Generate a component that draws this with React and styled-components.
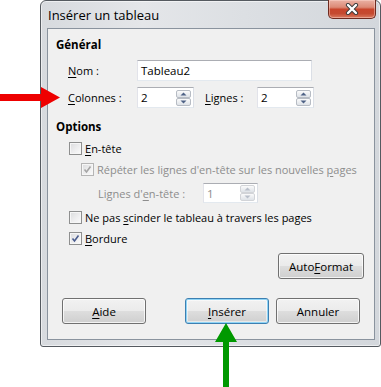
import React from 'react';
import styled, { createGlobalStyle } from 'styled-components';

const GlobalStyle = createGlobalStyle`
  html, body { margin: 0; padding: 0; background: #fff; }
  body {
    font-family: "Open Sans", "Noto Sans", sans-serif;
    font-size: 11px;
    color: #000;
  }
`;

const Page = styled.div`
  position: relative;
  width: 381px;
  height: 387px;
  overflow: hidden;
  background: #fff;
`;

const Window = styled.div`
  box-sizing: border-box;
  margin-left: 40px;
  width: 341px;
  height: 347px;
  border: 1px solid #555a60;
  border-radius: 6px 6px 3px 3px;
  background: linear-gradient(90deg, #d7dade 0%, #e4e6e9 30%, #dcdfe3 60%, #d3d7dc 100%);
  box-shadow: inset 0 0 0 1px rgba(255, 255, 255, 0.55);
  padding: 0 5px 6px 6px;
  display: flex;
  flex-direction: column;
`;

const TitleBar = styled.div`
  height: 27px;
  display: flex;
  justify-content: space-between;
  align-items: flex-start;
  padding-left: 1px;
`;

const Title = styled.div`
  margin-top: 6px;
  line-height: 17px;
  font-size: 13px;
`;

const CloseButton = styled.div`
  box-sizing: border-box;
  width: 48px;
  height: 19px;
  margin-top: -1px;
  margin-right: -1px;
  border: 1px solid #6e2a1f;
  border-top: none;
  border-radius: 0 0 5px 5px;
  background: linear-gradient(180deg, #eab1a4 0%, #dc8a76 40%, #c8452c 52%, #c54a30 75%, #d97a5f 100%);
  box-shadow: inset 0 0 0 1px rgba(255, 220, 210, 0.45);
  display: flex;
  align-items: center;
  justify-content: center;
`;

const Client = styled.div`
  flex: 1;
  box-sizing: border-box;
  border: 1px solid #8a939e;
  background: #f0f0f0;
  display: flex;
  flex-direction: column;
`;

const Heading = styled.div`
  margin-top: ${p => p.$top}px;
  padding-left: 8px;
  line-height: 16px;
  font-weight: bold;
  font-size: 11.5px;
`;

const Row = styled.div`
  display: flex;
  align-items: center;
  height: ${p => p.$h || 16}px;
  margin-top: ${p => p.$top}px;
  padding-left: ${p => p.$indent}px;
  color: ${p => (p.$disabled ? '#8d8d8d' : '#000')};
`;

const Label = styled.div`
  width: ${p => p.$w}px;
  flex-shrink: 0;
  margin-left: ${p => p.$ml || 0}px;
  white-space: nowrap;
`;

const U = styled.span`
  text-decoration: underline;
  text-underline-offset: 2px;
`;

const TextBox = styled.div`
  box-sizing: border-box;
  width: ${p => p.$w}px;
  height: ${p => p.$h || 21}px;
  border: 1px solid #abadb3;
  border-color: #abadb3 #dbdfe6 #e3e9ef #e2e3ea;
  background: #fff;
  display: flex;
  align-items: center;
  padding-left: 3px;
  font-size: 11.5px;
  color: ${p => (p.$disabled ? '#8d8d8d' : '#000')};
`;

const SpinValue = styled.span`
  flex: 1;
`;

const SpinButtons = styled.div`
  display: flex;
  flex-direction: column;
  margin-right: 2px;
`;

const SpinButton = styled.div`
  box-sizing: border-box;
  width: 15px;
  height: 8px;
  border: 1px solid ${p => (p.$disabled ? '#d2d4d8' : '#b7bcc4')};
  border-radius: 2px;
  background: linear-gradient(180deg, #fbfbfb 0%, #eceef1 50%, #dfe3e8 100%);
  display: flex;
  align-items: center;
  justify-content: center;
`;

const CheckBox = styled.div`
  box-sizing: border-box;
  width: 13px;
  height: 13px;
  flex-shrink: 0;
  border: 1px solid ${p => (p.$disabled ? '#b5b5b5' : '#8e8f8f')};
  background: linear-gradient(135deg, #dadbdd 0%, #eeeeef 55%, #fbfbfb 100%);
  box-shadow: inset 0 0 0 1px #f6f6f6;
  display: flex;
  align-items: center;
  justify-content: center;
  margin-right: 3px;
`;

const Button = styled.div`
  box-sizing: border-box;
  width: ${p => p.$w || 84}px;
  height: 26px;
  margin-left: ${p => p.$ml || 0}px;
  border: 1px solid ${p => (p.$default ? '#3c7fb1' : '#707070')};
  border-radius: 3px;
  background: linear-gradient(180deg, #f2f2f2 0%, #ebebeb 48%, #dddddd 52%, #cfcfcf 100%);
  box-shadow: ${p =>
    p.$default
      ? 'inset 0 0 0 1px #8fd4f6, inset 0 0 0 2px rgba(255,255,255,0.5)'
      : 'inset 0 0 0 1px rgba(255,255,255,0.75)'};
  display: flex;
  align-items: center;
  justify-content: center;
  font-size: 11.5px;
`;

const ButtonRight = styled.div`
  display: flex;
  justify-content: flex-end;
  margin-top: ${p => p.$top}px;
  padding-right: 10px;
`;

const ButtonRow = styled.div`
  display: flex;
  margin-top: ${p => p.$top}px;
  padding-left: 14px;
`;

const Overlay = styled.svg`
  position: absolute;
  left: 0;
  top: 0;
  pointer-events: none;
`;

const Tri = ({ up, disabled }) => (
  <svg width="7" height="4" viewBox="0 0 7 4">
    <path d={up ? 'M0.5 3.5 L3.5 0.5 L6.5 3.5 Z' : 'M0.5 0.5 L3.5 3.5 L6.5 0.5 Z'} fill={disabled ? '#b9bfca' : '#4d6185'} />
  </svg>
);

const Spin = ({ value, w, h, disabled }) => (
  <TextBox $w={w} $h={h} $disabled={disabled}>
    <SpinValue>{value}</SpinValue>
    <SpinButtons>
      <SpinButton $disabled={disabled}><Tri up disabled={disabled} /></SpinButton>
      <SpinButton $disabled={disabled}><Tri disabled={disabled} /></SpinButton>
    </SpinButtons>
  </TextBox>
);

const Check = ({ checked, disabled }) => (
  <CheckBox $disabled={disabled}>
    {checked && (
      <svg width="9" height="9" viewBox="0 0 9 9">
        <path d="M1.5 4.5 L3.5 7 L7.5 1.5" fill="none" stroke={disabled ? '#a5a5a5' : '#4a5c8e'} strokeWidth="1.6" />
      </svg>
    )}
  </CheckBox>
);

export default function App() {
  return (
    <Page>
      <GlobalStyle />
      <Window>
        <TitleBar>
          <Title>Insérer un tableau</Title>
          <CloseButton>
            <svg width="14" height="12" viewBox="0 0 14 12">
              <path d="M3 2 L11 10 M11 2 L3 10" stroke="#3a3a3a" strokeWidth="4.2" strokeLinecap="round" />
              <path d="M3 2 L11 10 M11 2 L3 10" stroke="#fff" strokeWidth="2.4" strokeLinecap="round" />
            </svg>
          </CloseButton>
        </TitleBar>
        <Client>
          <Heading $top={8}>Général</Heading>
          <Row $top={7} $h={21} $indent={20}>
            <Label $w={69}><U>N</U>om :</Label>
            <TextBox $w={175}>Tableau2</TextBox>
          </Row>
          <Row $top={6} $h={21} $indent={20}>
            <Label $w={69}><U>C</U>olonnes :</Label>
            <Spin value="2" w={57} />
            <Label $w={52} $ml={11}><U>L</U>ignes :</Label>
            <Spin value="2" w={57} />
          </Row>
          <Heading $top={11}>Options</Heading>
          <Row $top={5} $indent={21}>
            <Check />
            <span><U>E</U>n-tête</span>
          </Row>
          <Row $top={5} $indent={33} $disabled>
            <Check checked disabled />
            <span>Répéter les lignes d'en-tête sur les nouvelles <U>p</U>ages</span>
          </Row>
          <Row $top={6} $h={20} $indent={50} $disabled>
            <Label $w={105}>Lignes d'<U>e</U>n-tête :</Label>
            <Spin value="1" w={55} h={20} disabled />
          </Row>
          <Row $top={6} $indent={21}>
            <Check />
            <span>Ne pas <U>s</U>cinder le tableau à travers les pages</span>
          </Row>
          <Row $top={5} $indent={21}>
            <Check checked />
            <span><U>B</U>ordure</span>
          </Row>
          <ButtonRight $top={7}>
            <Button $w={86}>Auto<U>F</U>ormat</Button>
          </ButtonRight>
          <ButtonRow $top={19}>
            <Button><U>A</U>ide</Button>
            <Button $ml={39} $default><U>I</U>nsérer</Button>
            <Button $ml={7}>Annuler</Button>
          </ButtonRow>
        </Client>
      </Window>
      <Overlay width="381" height="387" viewBox="0 0 381 387">
        <path d="M0 94 L41 94 L41 87 L60 97.5 L41 108 L41 101 L0 101 Z" fill="#ee0000" />
        <path d="M223 387 L223 342 L215 342 L226 323 L237 342 L229 342 L229 387 Z" fill="#009900" />
      </Overlay>
    </Page>
  );
}
